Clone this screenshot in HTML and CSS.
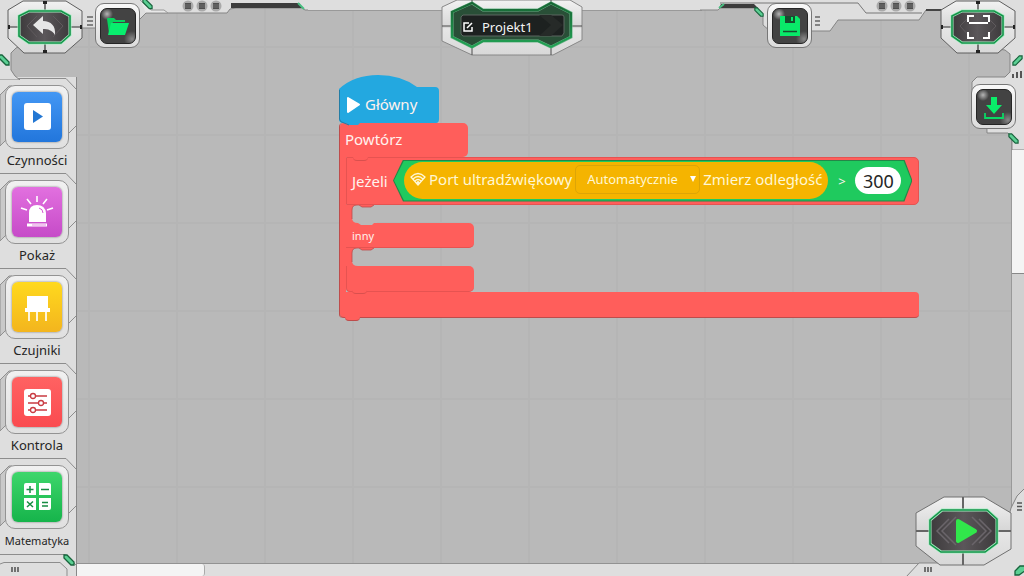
FILE: index.html
```html
<!DOCTYPE html>
<html lang="pl">
<head>
<meta charset="utf-8">
<meta name="viewport" content="width=device-width, initial-scale=1">
<title>Projekt1</title>
<link rel="stylesheet" href="styles.css">
</head>
<body>
<svg class="defs" aria-hidden="true">
  <defs>
    <linearGradient id="plate" x1="0" y1="0" x2="0" y2="1"><stop offset="0" stop-color="#f2f2f2"/><stop offset=".5" stop-color="#d6d6d6"/><stop offset=".52" stop-color="#e6e6e6"/><stop offset="1" stop-color="#d8d8d8"/></linearGradient>
    <linearGradient id="core" x1="0" y1="0" x2="1" y2="0"><stop offset="0" stop-color="#3d3a3c"/><stop offset=".5" stop-color="#5b575a"/><stop offset="1" stop-color="#3d3a3c"/></linearGradient>
    <linearGradient id="emerald" x1="0" y1="0" x2="0" y2="1"><stop offset="0" stop-color="#176634"/><stop offset="1" stop-color="#22a355"/></linearGradient>
    <symbol id="octagon" viewBox="0 0 76 54">
      <path d="M1 10 16 1H59L75 11V38L58 53H17L1 38Z" fill="url(#plate)" stroke="#5e5e5e"/>
      <path d="M38 1V53M1 27H75" stroke="#333" stroke-width="1.2"/>
      <path d="M36 1h4v3h-4zM36 50h4v3h-4zM1 25h2v4H1zM73 25h2v4h-2z" fill="#222"/>
      <path d="M12 16 22 11H54L63 16V35L54 43H22L12 36Z" fill="url(#core)" stroke="#a5efc2" stroke-width="3"/>
      <path d="M12 16 22 11H54L63 16V35L54 43H22L12 36Z" fill="none" stroke="#159249" stroke-width="1.6"/>
      <path d="M30 16 20 26 30 37M46 16 56 26 46 37" fill="none" stroke="#5f5a5d" stroke-width="1"/>
    </symbol>
    <symbol id="dots" viewBox="0 0 40 12">
      <g fill="#a9a9a9"><circle cx="6" cy="6" r="5.5"/><circle cx="20" cy="6" r="5.5"/><circle cx="34" cy="6" r="5.5"/></g>
      <path d="M3 3h6v6H3zM17 3h6v6h-6zM31 3h6v6h-6z" fill="#4e4e4e"/>
      <path d="M3 5h6M3 7h6M17 5h6M17 7h6M31 5h6M31 7h6" stroke="#8b8b8b" stroke-width=".6"/>
    </symbol>
    <symbol id="gem" viewBox="0 0 12 12"><path d="M1 1H4L11 8V11H8L1 4Z" fill="#5bcf93" stroke="#17633c" stroke-width="1.3"/></symbol>
    <symbol id="panel" viewBox="0 0 77 95">
      <path d="M0 3H63L69 10V56L76 49V95H0Z" fill="#dedede"/>
      <path d="M0 18 9 9H12L8 20V61L0 69Z" fill="#c9c9c9" stroke="#8f8f8f"/>
      <path d="M0 1.500H66L76 12M76 49 69 56" fill="none" stroke="#8d8d8d"/>
    </symbol>
    <symbol id="mouth" viewBox="0 0 31 20">
      <path d="M0 0H30V18H0Z" fill="#ff5e5b"/>
      <path d="M6 5Q6 0 11 0H13L16 2H25L28 0H31V18H28L26 20H15L12 18Q6 18 6 13Z" fill="#b9b9b9"/>
      <path d="M6 14V5Q6 0 11 0H13L16 2H25L28 0" fill="none" stroke="#bd4c4b" stroke-width=".8"/>
    </symbol>
  </defs>
</svg>

<div class="app">
  <header class="topbar">
    <svg class="trim trim-left" width="310" height="80" viewBox="0 0 310 80" aria-hidden="true">
      <path d="M-2 -2H312V10H305L302 8H236L230 9 227 13H146L140 19 132 28H60L16 48 11 53V70L15 76 20 80H-2Z" fill="#dedede" stroke="#858585"/>
      <path d="M140 0 151 10H164L168 13H146" fill="#e8e8e8" stroke="#999"/>
      <path d="M231 3H299L303 8H231Z" fill="#3c3c3c"/><path d="M298 3 304 9" stroke="#48bf81" stroke-width="2"/>
      <path d="M87 17H93M87 21H93M87 25H93" stroke="#666" stroke-width="1.5"/>
      <use href="#dots" x="182" y="0" width="40" height="12"/>
      <use href="#gem" x="142" y="-2" width="11" height="12"/>
      <use href="#gem" x="-2" y="54" width="12" height="12"/>
    </svg>
    <div class="trim trim-line"></div>
    <svg class="trim trim-right" width="324" height="150" viewBox="0 0 324 150" aria-hidden="true">
      <path d="M-2 -2V10H18L20 8 56 8 63 17V25L70 31H130L138 20H219L226 10H245L290 48 305 50 310 54V72L305 77H277L272 82V90H286L287 133H308L312 138V150H326V-2Z" fill="#dedede" stroke="#858585"/>
      <path d="M20 3H158L166 13H222" fill="none" stroke="#777"/>
      <path d="M21 4H54L58 8H19Z" fill="#3c3c3c"/><path d="M19 8 24 4" stroke="#48bf81" stroke-width="2"/>
      <path d="M226 10H242" stroke="#444" stroke-width="2"/>
      <path d="M115 17H120M115 21H120M115 25H120" stroke="#666" stroke-width="1.5"/>
      <use href="#dots" x="176" y="0" width="40" height="12"/>
      <use href="#gem" x="54" y="7" width="10" height="10"/>
      <g transform="matrix(-1 0 0 1 323 55)"><use href="#gem" width="11" height="11"/></g>
      <path d="M313 74V78M317 72V78M321 71V78" stroke="#555" stroke-width="2"/>
      <use href="#gem" x="308" y="133" width="11" height="11"/>
    </svg>

    <div class="group">
      <button class="oct" aria-label="Wstecz"><svg width="76" height="54" viewBox="0 0 76 54"><use href="#octagon" width="76" height="54"/><path d="M26 25 36 16V21C44 21 49 26 48 35 45 30 41 29 36 29V34Z" fill="#e6e6e6"/></svg></button>
      <button class="square" aria-label="Otwórz"><svg width="36" height="36" viewBox="0 0 34 34"><path d="M6 10Q6 9 7 9H13L15 11H24V13H12L8 24Z" fill="#06d45d"/><path d="M10 14H28L24 26H7Z" fill="#08ef6e"/></svg></button>
    </div>

    <label class="project">
      <svg class="project-frame" width="142" height="56" viewBox="0 0 142 56" aria-hidden="true">
        <path d="M16 0H129L141 7V40L112 55H31L1 41V7Z" fill="url(#plate)" stroke="#888"/>
        <path d="M31 0V55M110 0V55M1 26H141" stroke="#4a4a4a"/>
        <path d="M11 12 31 3 42 10H97L110 3 130 13V37L110 47 97 41H42L31 47 11 37Z" fill="#294f37" stroke="#69b486" stroke-width="3"/>
        <path d="M11 12 31 3 42 10H97L110 3 130 13V37L110 47 97 41H42L31 47 11 37Z" fill="none" stroke="url(#emerald)" stroke-width="2"/>
        <path d="M22 15H121Q123 15 123 17V33L121 36H22L20 34V17Z" fill="#1d2120" stroke="#5c6760"/>
        <path d="M98 15 110 25 98 36H110L122 25 110 15Z" fill="#262a28"/>
      </svg>
      <svg class="project-icon" width="10" height="10" viewBox="0 0 10 10" aria-hidden="true"><path d="M6 1H1V9H9V5M4 6 9 1" fill="none" stroke="#fff" stroke-width="1.5"/></svg>
      <input type="text" value="Projekt1" aria-label="Nazwa projektu">
    </label>

    <div class="group group-right">
      <button class="square" aria-label="Zapisz"><svg width="36" height="36" viewBox="0 0 34 34"><path d="M7 7H24L27 10V27H7Z" fill="#09e969"/><path d="M12 7H22V14H12Z" fill="#174c2e"/><path d="M18 8H20V12H18Z" fill="#09e969"/><path d="M10 22.500H24" stroke="#174c2e" stroke-width="1.500"/></svg></button>
      <button class="oct" aria-label="Pełny ekran"><svg width="76" height="54" viewBox="0 0 76 54"><use href="#octagon" width="76" height="54"/><path d="M28 22V16H34M43 16H49V22M49 32V38H43M34 38H28V32M29 23H48" fill="none" stroke="#fff" stroke-width="2"/></svg></button>
    </div>
  </header>

  <nav class="palette" aria-label="Kategorie">
    <button class="category">
      <svg class="panel"><use href="#panel" width="77" height="95"/></svg>
      <span class="tile blue"><svg width="50" height="50" viewBox="0 0 50 50"><rect x="12" y="11" width="27" height="27" rx="3" fill="#fff"/><path d="M21 18 31 24.500 21 31Z" fill="#2377d3"/></svg></span>
      <span class="name">Czynności</span>
    </button>
    <button class="category">
      <svg class="panel"><use href="#panel" width="77" height="95"/></svg>
      <span class="tile violet"><svg width="50" height="50" viewBox="0 0 50 50"><path d="M17 35V26Q17 18 25 18T34 26V35Z" fill="#fff"/><path d="M15 38H35" stroke="#fff" stroke-width="3"/><path d="M25 9V15M15 12 19 17M35 12 31 17M9 21 15 23M41 21 35 23" stroke="#fff" stroke-width="1.600"/><path d="M27 21Q31 22 31 26" fill="none" stroke="#d65bd0"/><path d="M20 38H34" stroke="#d65bd0" stroke-width=".7"/></svg></span>
      <span class="name">Pokaż</span>
    </button>
    <button class="category">
      <svg class="panel"><use href="#panel" width="77" height="95"/></svg>
      <span class="tile yellow"><svg width="50" height="50" viewBox="0 0 50 50"><path d="M15 14H36V26H38V30H13V26H15Z" fill="#fff"/><path d="M17 29V39M25 29V39M34 29V39" stroke="#fff" stroke-width="1.700"/></svg></span>
      <span class="name">Czujniki</span>
    </button>
    <button class="category">
      <svg class="panel"><use href="#panel" width="77" height="95"/></svg>
      <span class="tile red"><svg width="50" height="50" viewBox="0 0 50 50"><rect x="12" y="12" width="27" height="27" rx="3" fill="#fff"/><path d="M16 19H35M16 26H35M16 33H35" stroke="#c93b42" stroke-width="1.300"/><g fill="#fff" stroke="#c93b42" stroke-width="1.300"><circle cx="21" cy="19" r="2.500"/><circle cx="29" cy="26" r="2.500"/><circle cx="21" cy="33" r="2.500"/></g></svg></span>
      <span class="name">Kontrola</span>
    </button>
    <button class="category">
      <svg class="panel"><use href="#panel" width="77" height="95"/></svg>
      <span class="tile green"><svg width="50" height="50" viewBox="0 0 50 50"><path d="M14 11H24V23H12V13Q12 11 14 11ZM27 11H37Q39 11 39 13V23H27ZM12 26H24V38H14Q12 38 12 36ZM27 26H39V36Q39 38 37 38H27Z" fill="#fff"/><path d="M14.500 17.500H21.500M18 14V21M29 17.500H37M15 29.500 21 35M21 29.500 15 35M30 30.500H36M30 34H36" stroke="#178c43" stroke-width="1.500"/></svg></span>
      <span class="name small">Matematyka</span>
    </button>
    <svg class="palette-foot" width="77" height="24" viewBox="0 0 77 24" aria-hidden="true"><path d="M0 2.500H65L76 13M0 12 4 10.500H60L67 17V24" fill="none" stroke="#8d8d8d"/><path d="M12 15V20M15 15V20M18 15V20" stroke="#555" stroke-width="1.600"/><use href="#gem" x="63" y="2" width="12" height="12"/></svg>
  </nav>

  <main class="workspace">
    <section class="script" aria-label="Program">
      <div class="hat">
        <svg width="102" height="52" viewBox="0 0 102 52" aria-hidden="true"><path d="M1 17V44Q1 48 5 48H8L11 50H20L22 48H98Q101 48 101 44V16Q101 12 97 12H79Q63 0 40 0 16 0 1 14Z" fill="#23a8e0"/><path d="M1.500 15V44Q1.500 47 6 48L11 50" fill="none" stroke="#247da5"/><path d="M10 23 21 29.500 10 37Z" fill="#fff" stroke="#fff" stroke-width="2" stroke-linejoin="round"/></svg>
        <span>Główny</span>
      </div>
      <div class="loop">
        <div class="loop-head">Powtórz</div>
        <div class="loop-body">
          <div class="branch-head">
            <span class="branch-word">Jeżeli</span>
            <div class="compare">
              <div class="sensor">
                <svg width="16" height="14" viewBox="0 0 16 14" aria-hidden="true"><path d="M1 5Q8-2 15 5L8 13Z" fill="none" stroke="#fff8d8" stroke-width="1.300" stroke-linejoin="round"/><path d="M3 7Q8 2 13 7M5 9Q8 6 11 9" fill="none" stroke="#fff8d8" stroke-width="1.300"/><circle cx="8" cy="10.500" r="1.500" fill="#fff8d8"/></svg>
                <span>Port ultradźwiękowy</span>
                <span class="port">
                  <select aria-label="Port"><option>Automatycznie</option></select>
                  <svg width="6" height="6" viewBox="0 0 6 6" aria-hidden="true"><path d="M0 0H6L3 6Z" fill="#fff"/></svg>
                </span>
                <span>Zmierz odległość</span>
              </div>
              <span class="operator">&gt;</span>
              <input class="value" type="text" value="300" aria-label="Wartość">
            </div>
          </div>
          <svg class="mouth" aria-hidden="true"><use href="#mouth" width="31" height="20"/></svg>
          <div class="branch-bar">inny</div>
          <svg class="mouth" aria-hidden="true"><use href="#mouth" width="31" height="20"/></svg>
          <div class="branch-bar branch-end"></div>
        </div>
        <div class="loop-foot"></div>
      </div>
    </section>
  </main>

  <aside class="rail">
    <button class="square download" aria-label="Pobierz"><svg width="36" height="36" viewBox="0 0 34 34"><path d="M14 7H20V15H25L17 24 9 15H14Z" fill="#09ed69"/><path d="M8 23V28H26V23" fill="none" stroke="#09d964" stroke-width="1.800"/></svg></button>
    <div class="thumb-y"></div>
  </aside>
  <div class="track-x"><div class="thumb-x"></div></div>

  <div class="corner">
    <svg class="corner-trim" width="140" height="96" viewBox="0 0 140 96" aria-hidden="true"><path d="M22 97 35 83H57L94 83 119 60 127 28 133 16 141 8V97Z" fill="#dedede" stroke="#858585"/><path d="M41 87V92M44 87V92M47 87V92" stroke="#555" stroke-width="1.600"/><path d="M133 23H138M133 26.500H138M133 30H138" stroke="#555" stroke-width="1.500"/><path d="M131 95V91L136 86H142V90L135 95Z" fill="#5bcf93" stroke="#17633c" stroke-width="1.300"/></svg>
    <button class="run" aria-label="Uruchom"><svg width="97" height="70" viewBox="0 0 97 70"><path d="M1 17 29 1H69L96 17V53L69 69H25L1 50Z" fill="url(#plate)" stroke="#707070"/><path d="M48 1V69M1 35H96" stroke="#666" stroke-width="2"/><path d="M15 24 27 14H72L82 23V47L70 56H26L15 48Z" fill="url(#core)" stroke="#a5efc2" stroke-width="3"/><path d="M15 24 27 14H72L82 23V47L70 56H26L15 48Z" fill="none" stroke="#159249" stroke-width="1.500"/><path d="M41 21 27 35 41 49M57 21 71 35 57 49M34 23 22 35 34 47M64 23 76 35 64 47" fill="none" stroke="#6a656a" stroke-width="1.500"/><path d="M43 25 60 35 43 45Z" fill="#31e74b" stroke="#31e74b" stroke-width="4" stroke-linejoin="round"/></svg></button>
  </div>
</div>
</body>
</html>
```

FILE: styles.css
```css
:root {
  --canvas: #b9b9b9;
  --metal: #dedede;
  --edge: #858585;
  --red: #ff5e5b;
  --red-dark: #bd4c4b;
}

* { box-sizing: border-box; }

body {
  margin: 0;
  font-family: "Noto Sans", "Open Sans", sans-serif;
  color: #252525;
}

button {
  padding: 0;
  border: 0;
  background: none;
  font: inherit;
  color: inherit;
  cursor: pointer;
}

svg { display: block; }

.defs { position: absolute; width: 0; height: 0; }

.app {
  position: relative;
  display: grid;
  grid-template-columns: 77px 1fr 13px;
  grid-template-rows: 77px 1fr 13px;
  min-height: 100vh;
  overflow: hidden;
  background-color: var(--canvas);
  background-image:
    linear-gradient(90deg, #b5b5b5 2px, transparent 2px),
    linear-gradient(#b5b5b5 2px, transparent 2px);
  background-size: 88px 88px;
  background-position: 0 46px;
}

/* top bar */
.topbar {
  grid-column: 1 / -1;
  position: relative;
  z-index: 2;
  display: grid;
  grid-template-columns: 1fr auto 1fr;
  align-items: start;
}

.trim { position: absolute; top: 0; pointer-events: none; }
.trim-left { left: 0; }
.trim-right { right: 0; }
.trim-line {
  left: 308px;
  right: 322px;
  height: 11px;
  background: var(--metal);
  border-bottom: 1px solid #999;
}

.group { position: relative; display: flex; gap: 12px; padding-left: 7px; }
.group-right { justify-content: flex-end; gap: 128px; padding: 0 8px 0 0; }

.square {
  display: grid;
  place-items: center;
  width: 45px;
  height: 45px;
  margin-top: 3px;
  border: 1px solid #777;
  border-radius: 9px;
  background: linear-gradient(#f8f8f8, #dcdcdc);
}
.square svg {
  border: 1px solid #252525;
  border-radius: 7px;
  background:
    radial-gradient(circle at 6px 5px, #b5b5b5, transparent 6px),
    radial-gradient(circle at 31px 30px, #888, transparent 8px),
    #434343;
}

.project {
  position: relative;
  display: flex;
  align-items: center;
  gap: 9px;
  width: 142px;
  height: 55px;
  padding: 0 22px 2px;
}
.project-frame { position: absolute; top: 0; left: 0; }
.project-icon { position: relative; flex: none; }
.project input {
  position: relative;
  min-width: 0;
  flex: 1;
  padding: 0;
  border: 0;
  background: none;
  color: #f4f4f4;
  font: 13px "Noto Sans", sans-serif;
}

/* category palette */
.palette {
  position: relative;
  z-index: 1;
  grid-row: 2 / 4;
  display: flex;
  flex-direction: column;
  background: var(--metal);
  border-right: 1px solid #888;
}
.category {
  position: relative;
  display: flex;
  flex-direction: column;
  align-items: center;
  height: 95px;
  padding: 8px 2px 0 0;
}
.panel { position: absolute; top: 0; left: 0; width: 77px; height: 95px; }
.tile {
  position: relative;
  padding: 6px;
  border: 1px solid #939393;
  border-radius: 10px;
  background: linear-gradient(#f1f1f1, #e0e0e0);
}
.tile svg { border-radius: 6px; box-shadow: 0 0 2px #666; }
.blue svg { background: linear-gradient(#4397f4, #2276dc); }
.violet svg { background: linear-gradient(#e270df, #c64bc8); }
.yellow svg { background: linear-gradient(#ffd91e, #f3b51e); }
.red svg { background: linear-gradient(#ff6262, #fa4b50); }
.green svg { background: linear-gradient(#3ed66b, #16b44b); }
.name { position: relative; font-size: 13px; line-height: 23px; }
.small { font-size: 11px; }
.palette-foot { margin-top: auto; }

/* program on the canvas */
.workspace { position: relative; }
.script {
  position: absolute;
  top: -2px;
  left: 261px;
  color: #fff2ee;
  font-size: 15px;
}
.hat { position: relative; z-index: 1; height: 48px; padding: 18px 0 0 27px; line-height: 22px; }
.hat svg { position: absolute; top: 0; left: 0; }
.hat span { position: relative; }

.loop { margin-left: 1px; border-left: 1px solid var(--red-dark); border-radius: 4px; }
.loop-head {
  width: 128px;
  height: 34px;
  padding-left: 5px;
  background: var(--red);
  border-radius: 4px 5px 5px 0;
  line-height: 33px;
}
.loop-body { border-left: 6px solid var(--red); }
.branch-head {
  position: relative;
  display: flex;
  align-items: center;
  height: 48px;
  padding: 0 6px 1px 5px;
  background: var(--red);
  border: 1px solid #e65351;
  border-radius: 0 5px 5px 0;
}
.branch-head::before {
  content: "";
  position: absolute;
  top: -1px;
  left: 6px;
  width: 15px;
  height: 3px;
  background: var(--red);
  border-bottom: 1px solid #d9504e;
  border-radius: 0 0 4px 4px;
}
.branch-word { width: 41px; }
.compare {
  position: relative;
  display: flex;
  align-items: center;
  height: 42px;
  padding: 0 11px;
}
.compare::before, .compare::after {
  content: "";
  position: absolute;
  inset: 0;
  background: #248748;
  clip-path: polygon(10px 0, calc(100% - 8px) 0, 100% 50%, calc(100% - 8px) 100%, 10px 100%, 0 50%);
}
.compare::after { inset: 1px; background: #1fca5e; }
.compare > * { position: relative; z-index: 1; }
.sensor {
  display: flex;
  align-items: center;
  gap: 3px;
  height: 37px;
  padding: 0 6px 3px;
  border-radius: 19px;
  background: #f5b400;
  color: #fff7d3;
  white-space: nowrap;
}
.port { position: relative; display: flex; align-items: center; }
.port select {
  appearance: none;
  width: 125px;
  height: 29px;
  padding: 0 18px 0 11px;
  border: 1px solid #dda506;
  border-radius: 5px;
  background: none;
  color: inherit;
  font: 13px "Noto Sans", sans-serif;
}
.port svg { position: absolute; right: 4px; }
.operator { width: 27px; text-align: center; font-size: 13px; }
.value {
  width: 46px;
  height: 27px;
  padding: 0;
  border: 0;
  border-radius: 14px;
  background: #fff;
  color: #252525;
  font: 18px "Noto Sans", sans-serif;
  text-align: center;
}
.mouth { position: relative; z-index: 1; width: 31px; height: 18px; overflow: visible; }
.branch-bar {
  width: 128px;
  height: 25px;
  padding-left: 6px;
  background: var(--red);
  border-bottom: 1px solid #e65351;
  border-radius: 0 5px 5px 0;
  font-size: 11px;
  line-height: 25px;
}
.branch-end { position: relative; z-index: 1; height: 26px; border-left: 1px solid #e65351; border-radius: 0 5px 5px 4px; }
.branch-end::after {
  content: "";
  position: absolute;
  top: 24px;
  left: 5px;
  width: 15px;
  height: 3px;
  background: var(--red);
  border-bottom: 1px solid #d9504e;
  border-radius: 0 0 4px 4px;
}
.loop-foot {
  position: relative;
  height: 26px;
  background: var(--red);
  border-bottom: 1px solid var(--red-dark);
  border-radius: 0 4px 4px 4px;
}
.loop-foot::after {
  content: "";
  position: absolute;
  top: 25px;
  left: 5px;
  width: 15px;
  height: 3px;
  background: var(--red);
  border-bottom: 1px solid var(--red-dark);
  border-radius: 0 0 4px 4px;
}

/* scroll rails */
.rail {
  display: flex;
  flex-direction: column;
  align-items: flex-end;
  background: linear-gradient(90deg, #999 1px, #d0d0d0 1px);
}
.download { position: relative; z-index: 3; margin: 7px 8px 10px 0; flex: none; }
.thumb-y { width: 12px; height: 135px; background: #f4f4f4; border-bottom: 1px solid #888; }
.track-x {
  grid-column: 2 / 4;
  background: var(--metal);
  border-top: 1px solid #929292;
}
.thumb-x { width: 128px; height: 12px; background: #f4f4f4; border-right: 1px solid #aaa; border-radius: 0 3px 3px 0; }

.corner { position: absolute; right: 0; bottom: 0; z-index: 2; padding: 17px 12px 10px 31px; }
.corner-trim { position: absolute; right: 0; bottom: 0; }
.run { position: relative; display: block; }
```
